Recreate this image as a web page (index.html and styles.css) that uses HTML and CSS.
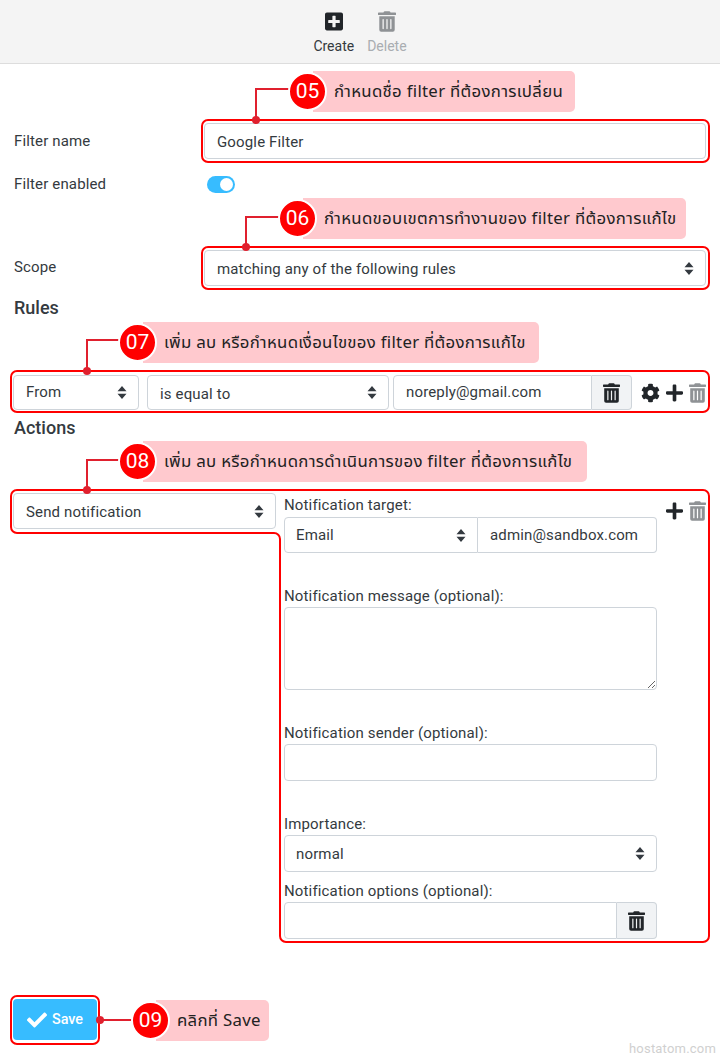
FILE: index.html
```html
<!DOCTYPE html>
<html lang="en">
<head>
    <meta charset="UTF-8">
    <meta name="viewport" content="width=device-width, initial-scale=1.0">
    <title>Edit Filter</title>
    <link rel="stylesheet" href="styles.css">
</head>
<body>
    <svg class="icon-defs" width="0" height="0">
        <symbol id="i-trash" viewBox="0 0 448 512"><path d="M32 464a48 48 0 0 0 48 48h288a48 48 0 0 0 48-48V128H32zm272-256a16 16 0 0 1 32 0v224a16 16 0 0 1-32 0zm-96 0a16 16 0 0 1 32 0v224a16 16 0 0 1-32 0zm-96 0a16 16 0 0 1 32 0v224a16 16 0 0 1-32 0zM432 32H312l-9.4-18.7A24 24 0 0 0 281.1 0H166.8a23.72 23.72 0 0 0-21.4 13.3L136 32H16A16 16 0 0 0 0 48v32a16 16 0 0 0 16 16h416a16 16 0 0 0 16-16V48a16 16 0 0 0-16-16z"/></symbol>
        <symbol id="i-plus-square" viewBox="0 0 448 512"><path d="M400 32H48C21.5 32 0 53.5 0 80v352c0 26.5 21.5 48 48 48h352c26.5 0 48-21.5 48-48V80c0-26.5-21.5-48-48-48zm-32 252c0 6.6-5.4 12-12 12h-92v92c0 6.6-5.4 12-12 12h-56c-6.6 0-12-5.4-12-12v-92H92c-6.6 0-12-5.4-12-12v-56c0-6.6 5.4-12 12-12h92v-92c0-6.6 5.4-12 12-12h56c6.6 0 12 5.4 12 12v92h92c6.6 0 12 5.4 12 12v56z"/></symbol>
        <symbol id="i-plus" viewBox="0 0 448 512"><path d="M416 208H272V64c0-17.67-14.33-32-32-32h-32c-17.67 0-32 14.33-32 32v144H32c-17.67 0-32 14.33-32 32v32c0 17.67 14.33 32 32 32h144v144c0 17.67 14.33 32 32 32h32c17.67 0 32-14.33 32-32V304h144c17.67 0 32-14.33 32-32v-32c0-17.67-14.33-32-32-32z"/></symbol>
        <symbol id="i-cog" viewBox="0 0 512 512"><path d="M487.4 315.7l-42.6-24.6c4.3-23.2 4.3-47 0-70.2l42.6-24.6c4.9-2.8 7.1-8.6 5.5-14-11.1-35.6-30-67.8-54.7-94.6-3.8-4.1-10-5.1-14.8-2.3L380.8 110c-17.9-15.4-38.5-27.3-60.8-35.1V25.8c0-5.6-3.9-10.5-9.4-11.7-36.7-8.2-74.3-7.8-109.2 0-5.5 1.2-9.4 6.1-9.4 11.7V75c-22.2 7.9-42.8 19.8-60.8 35.1L88.7 85.5c-4.9-2.8-11-1.9-14.8 2.3-24.7 26.7-43.6 58.9-54.7 94.6-1.7 5.4.6 11.2 5.5 14L67.3 221c-4.3 23.2-4.3 47 0 70.2l-42.6 24.6c-4.9 2.8-7.1 8.6-5.5 14 11.1 35.6 30 67.8 54.7 94.6 3.8 4.1 10 5.1 14.8 2.3l42.6-24.6c17.9 15.4 38.5 27.3 60.8 35.1v49.2c0 5.6 3.9 10.5 9.4 11.7 36.7 8.2 74.3 7.8 109.2 0 5.5-1.2 9.4-6.1 9.4-11.7v-49.2c22.2-7.9 42.8-19.8 60.8-35.1l42.6 24.6c4.9 2.8 11 1.9 14.8-2.3 24.7-26.7 43.6-58.9 54.7-94.6 1.5-5.5-.7-11.3-5.6-14.1zM256 336c-44.1 0-80-35.9-80-80s35.9-80 80-80 80 35.9 80 80-35.9 80-80 80z"/></symbol>
        <symbol id="i-check" viewBox="0 0 512 512"><path d="M173.898 439.404l-166.4-166.4c-9.997-9.997-9.997-26.206 0-36.204l36.203-36.204c9.997-10 26.207-10 36.204 0L192 312.69 432.095 72.596c9.997-9.997 26.207-9.997 36.204 0l36.203 36.204c9.997 9.997 9.997 26.206 0 36.204l-294.4 294.401c-9.998 9.997-26.207 9.997-36.204-.001z"/></symbol>
    </svg>

    <div class="page">
        <div class="toolbar">
            <div class="tool">
                <svg class="tool-icon"><use href="#i-plus-square"/></svg>
                <span>Create</span>
            </div>
            <div class="tool tool-disabled">
                <svg class="tool-icon"><use href="#i-trash"/></svg>
                <span>Delete</span>
            </div>
        </div>

        <form class="filter-form">
            <div class="row row-name">
                <label class="row-label">Filter name</label>
                <input class="control" type="text" value="Google Filter">
            </div>
            <div class="row row-enabled">
                <label class="row-label">Filter enabled</label>
                <span class="toggle"></span>
            </div>
            <div class="row row-scope">
                <label class="row-label">Scope</label>
                <select class="control">
                    <option>matching any of the following rules</option>
                </select>
            </div>

            <h2 class="section-title title-rules">Rules</h2>
            <div class="rule-row">
                <select class="control rule-field"><option>From</option></select>
                <select class="control rule-op"><option>is equal to</option></select>
                <div class="input-group rule-value">
                    <input class="control" type="text" value="noreply@gmail.com">
                    <span class="addon"><svg class="icon"><use href="#i-trash"/></svg></span>
                </div>
                <div class="row-icons">
                    <svg class="icon icon-cog"><use href="#i-cog"/></svg>
                    <svg class="icon icon-plus"><use href="#i-plus"/></svg>
                    <svg class="icon icon-muted"><use href="#i-trash"/></svg>
                </div>
            </div>

            <h2 class="section-title title-actions">Actions</h2>
            <div class="action-row">
                <select class="control action-type"><option>Send notification</option></select>
                <div class="action-fields">
                    <label class="field-label label-first">Notification target:</label>
                    <div class="input-group">
                        <select class="control target-type"><option>Email</option></select>
                        <input class="control" type="text" value="admin@sandbox.com">
                    </div>

                    <label class="field-label gap-large">Notification message (optional):</label>
                    <textarea class="control message"></textarea>

                    <label class="field-label gap-large">Notification sender (optional):</label>
                    <input class="control control-tall" type="text">

                    <label class="field-label gap-large">Importance:</label>
                    <select class="control control-tall"><option>normal</option></select>

                    <label class="field-label gap-small">Notification options (optional):</label>
                    <div class="input-group">
                        <input class="control control-tall" type="text">
                        <span class="addon"><svg class="icon"><use href="#i-trash"/></svg></span>
                    </div>
                </div>
                <div class="row-icons action-icons">
                    <svg class="icon icon-plus"><use href="#i-plus"/></svg>
                    <svg class="icon icon-muted"><use href="#i-trash"/></svg>
                </div>
            </div>

            <button class="save-btn" type="button">
                <svg class="icon"><use href="#i-check"/></svg>
                Save
            </button>
        </form>

        <!-- Red guide lines drawn over the form -->
        <svg class="guides" width="720" height="1056" viewBox="0 0 720 1056">
            <rect x="202" y="120" width="507" height="42" rx="6"/>
            <rect x="202" y="247" width="507" height="42" rx="6"/>
            <rect x="11" y="371" width="698" height="41" rx="6"/>
            <rect x="11" y="996" width="88" height="48" rx="6"/>
            <path d="M17 490H703a6 6 0 0 1 6 6V936a6 6 0 0 1-6 6H286a6 6 0 0 1-6-6V539a6 6 0 0 0-6-6H17a6 6 0 0 1-6-6V496a6 6 0 0 1 6-6Z"/>
            <path class="lead" d="M256 120V89H290"/>
            <path class="lead" d="M246 247V217H280"/>
            <path class="lead" d="M87 371V340H120"/>
            <path class="lead" d="M87 490V460H120"/>
            <path class="lead" d="M100 1020H133"/>
            <circle cx="256" cy="120" r="4"/>
            <circle cx="246" cy="247" r="4"/>
            <circle cx="87" cy="371" r="4"/>
            <circle cx="87" cy="490" r="4"/>
            <circle cx="100" cy="1020" r="4"/>
        </svg>

        <div class="callout callout-05"><b class="badge">05</b><span>กำหนดชื่อ filter ที่ต้องการเปลี่ยน</span></div>
        <div class="callout callout-06"><b class="badge">06</b><span>กำหนดขอบเขตการทำงานของ filter ที่ต้องการแก้ไข</span></div>
        <div class="callout callout-07"><b class="badge">07</b><span>เพิ่ม ลบ หรือกำหนดเงื่อนไขของ filter ที่ต้องการแก้ไข</span></div>
        <div class="callout callout-08"><b class="badge">08</b><span>เพิ่ม ลบ หรือกำหนดการดำเนินการของ filter ที่ต้องการแก้ไข</span></div>
        <div class="callout callout-09"><b class="badge">09</b><span>คลิกที่ Save</span></div>

        <div class="watermark">hostatom.com</div>
    </div>
</body>
</html>
```

FILE: styles.css
```css
* {
    box-sizing: border-box;
}

body {
    margin: 0;
    background: #fff;
    color: #343a40;
    font-family: Roboto, "Noto Sans", sans-serif;
    font-size: 15px;
    letter-spacing: 0.15px;
}

.icon-defs {
    position: absolute;
}

.page {
    position: relative;
    width: 720px;
    height: 1056px;
    overflow: hidden;
}

/* Top toolbar */
.toolbar {
    display: flex;
    justify-content: center;
    gap: 13px;
    height: 64px;
    padding-top: 11px;
    background: #f4f4f4;
    border-bottom: 1px solid #ddd;
}

.tool {
    display: flex;
    flex-direction: column;
    align-items: center;
    gap: 6px;
    font-size: 14px;
    letter-spacing: 0;
    color: #343a40;
}

.tool-icon {
    width: 18px;
    height: 21px;
    fill: #212529;
}

.tool-disabled {
    color: #a9adb1;
}

.tool-disabled .tool-icon {
    fill: #8f9295;
}

/* Form */
.filter-form {
    padding: 0 14px 0 13px;
}

.row {
    display: grid;
    grid-template-columns: 191px 1fr;
    align-items: center;
}

.row-label {
    padding-left: 1px;
}

.row-name {
    margin-top: 59px;
}

.row-name .control {
    padding-top: 2px;
}

.row-enabled {
    margin-top: 16px;
    height: 17px;
}

.row-scope {
    margin-top: 58px;
}

.row-scope .row-label {
    padding-bottom: 2px;
}

.row-scope .control {
    padding-top: 2px;
}

.control {
    display: block;
    width: 100%;
    height: 36px;
    padding: 0 12px;
    background-color: #fff;
    border: 1px solid #ced4da;
    border-radius: 4px;
    color: #343a40;
    font: inherit;
    letter-spacing: inherit;
    outline: none;
}

.control-tall {
    height: 37px;
}

select.control {
    appearance: none;
    background-image: url("data:image/svg+xml,%3Csvg xmlns='http://www.w3.org/2000/svg' width='10' height='13'%3E%3Cpath fill='%23343a40' d='M5 0l4.5 5.300h-9zM5 13L.5 7.700h9z'/%3E%3C/svg%3E");
    background-repeat: no-repeat;
    background-position: right 11px center;
}

.toggle {
    position: relative;
    display: block;
    width: 28px;
    height: 17px;
    margin-left: 3px;
    background: #37bcff;
    border-radius: 9px;
}

.toggle::after {
    content: "";
    position: absolute;
    top: 2px;
    right: 2px;
    width: 13px;
    height: 13px;
    background: #fff;
    border-radius: 50%;
}

.section-title {
    height: 24px;
    margin: 0;
    padding-left: 1px;
    font-size: 18px;
    font-weight: 500;
    line-height: 26px;
    letter-spacing: 0;
    color: #343a40;
}

.title-rules {
    margin-top: 9px;
}

.title-actions {
    margin-top: 5px;
}

/* Rule line */
.rule-row {
    display: flex;
    align-items: center;
    height: 35px;
    margin-top: 56px;
}

.rule-row .control {
    height: 35px;
    padding-bottom: 2px;
}

.rule-field {
    flex: 0 0 126px;
}

.rule-row .rule-op {
    flex: 0 0 242px;
    margin-left: 8px;
    padding-top: 2px;
    padding-bottom: 0;
}

.rule-value {
    flex: 0 0 239px;
    margin-left: 4px;
}

.input-group {
    display: flex;
    width: 100%;
}

.input-group .control {
    flex: 1;
    min-width: 0;
    border-radius: 4px 0 0 4px;
}

.input-group .target-type {
    flex: 0 0 194px;
}

.input-group .target-type + .control {
    border-left: 0;
    border-radius: 0 4px 4px 0;
}

.addon {
    display: flex;
    flex: 0 0 40px;
    align-items: center;
    justify-content: center;
    background: #f1f3f5;
    border: 1px solid #ced4da;
    border-left: 0;
    border-radius: 0 4px 4px 0;
}

.icon {
    width: 17px;
    height: 20px;
    fill: #212529;
}

.row-icons {
    display: flex;
    align-items: center;
    gap: 6px;
    margin-left: 9px;
}

.icon-cog {
    width: 19px;
}

.icon-muted {
    fill: #8f9295;
}

/* Action block */
.action-row {
    display: flex;
    align-items: flex-start;
    margin-top: 54px;
}

.action-type {
    flex: 0 0 263px;
    padding-top: 2px;
}

.action-fields {
    flex: 0 0 373px;
    margin-left: 8px;
    margin-top: 1px;
}

.action-fields select.control {
    padding-left: 11px;
}

.action-icons {
    margin-left: 9px;
    margin-top: 8px;
}

.field-label {
    display: block;
    height: 22px;
    line-height: 22px;
}

.label-first {
    margin-bottom: 1px;
}

.gap-large {
    margin-top: 32px;
}

.gap-small {
    margin-top: 8px;
}

.message {
    height: 83px;
    resize: both;
}

.save-btn {
    display: flex;
    align-items: center;
    justify-content: center;
    gap: 5px;
    width: 84px;
    height: 41px;
    margin-top: 60px;
    padding: 0;
    background: #37bcff;
    border: 0;
    border-radius: 4px;
    color: #fff;
    font: inherit;
    font-size: 14.4px;
    font-weight: 500;
}

.save-btn .icon {
    width: 20px;
    fill: #fff;
}

/* Annotations laid over the form */
.guides {
    position: absolute;
    top: 0;
    left: 0;
    fill: none;
    stroke: #f00;
    stroke-width: 2;
}

.guides .lead {
    stroke: #e0202e;
}

.guides circle {
    fill: #e0202e;
    stroke: none;
}

.callout {
    position: absolute;
    display: flex;
    align-items: center;
    height: 41px;
    padding-right: 9px;
    background: #ffc9ce;
    border-radius: 0 5px 5px 0;
    color: #222;
    font-family: "Noto Sans Thai", "Noto Sans", "DejaVu Sans", sans-serif;
    font-size: 16.8px;
    letter-spacing: 0.3px;
    white-space: nowrap;
}

.badge {
    position: absolute;
    top: 1px;
    left: -25px;
    width: 39px;
    height: 39px;
    background: #f00;
    border: 2px solid #fff;
    border-radius: 50%;
    color: #fff;
    font-family: Roboto, sans-serif;
    font-size: 21px;
    font-weight: 400;
    line-height: 35px;
    letter-spacing: 0;
    text-align: center;
}

.callout-05 {
    top: 71px;
    left: 313px;
    width: 262px;
    padding-left: 21px;
}

.callout-06 {
    top: 198px;
    left: 303px;
    width: 383px;
    padding-left: 21px;
}

.callout-07 {
    top: 322px;
    left: 143px;
    width: 396px;
    padding-left: 21px;
}

.callout-08 {
    top: 441px;
    left: 143px;
    width: 444px;
    padding-left: 21px;
}

.callout-09 {
    top: 1000px;
    left: 156px;
    width: 113px;
    padding-left: 21px;
}

.watermark {
    position: absolute;
    right: 4px;
    bottom: 0;
    color: #d0d0d0;
    font-size: 13px;
    letter-spacing: 0.2px;
}
```
